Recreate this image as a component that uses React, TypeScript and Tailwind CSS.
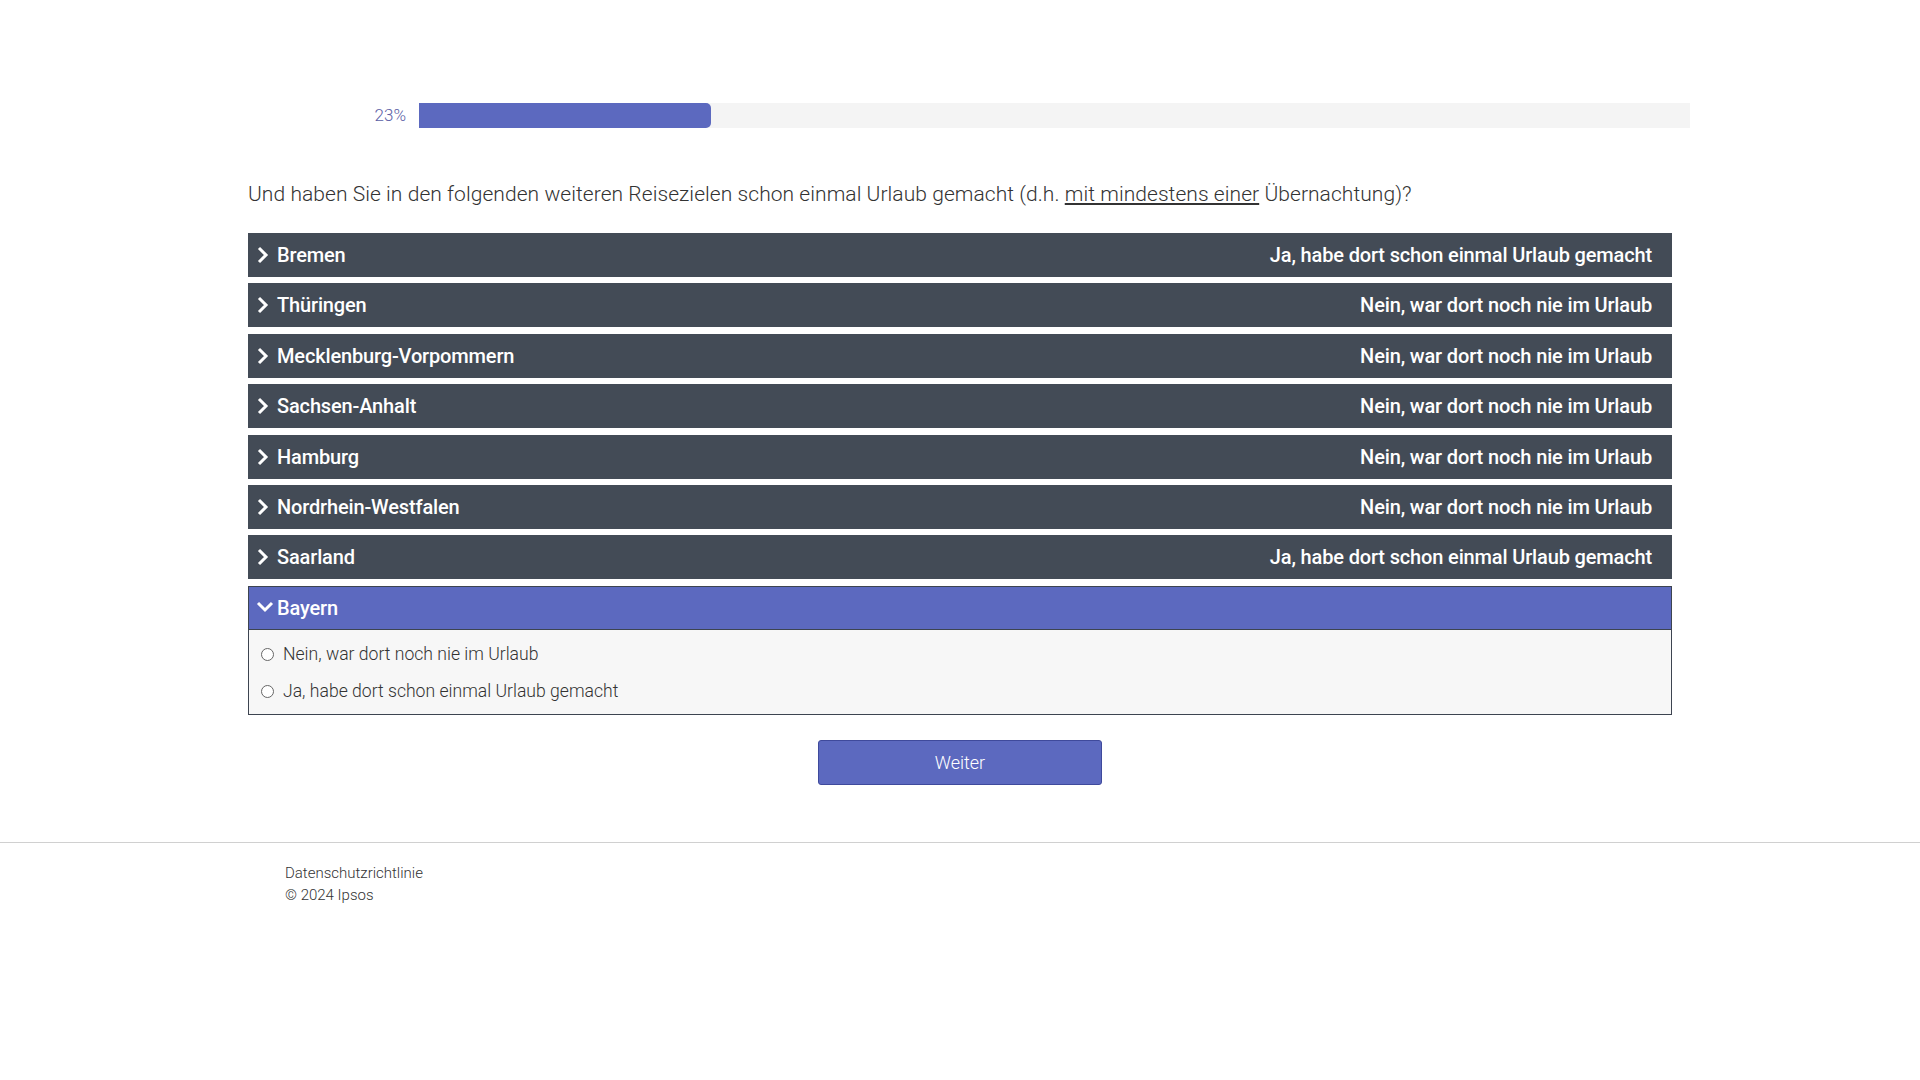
import React from "react";

type Row = { name: string; answer: string };

const rows: Row[] = [
  { name: "Bremen", answer: "Ja, habe dort schon einmal Urlaub gemacht" },
  { name: "Thüringen", answer: "Nein, war dort noch nie im Urlaub" },
  { name: "Mecklenburg-Vorpommern", answer: "Nein, war dort noch nie im Urlaub" },
  { name: "Sachsen-Anhalt", answer: "Nein, war dort noch nie im Urlaub" },
  { name: "Hamburg", answer: "Nein, war dort noch nie im Urlaub" },
  { name: "Nordrhein-Westfalen", answer: "Nein, war dort noch nie im Urlaub" },
  { name: "Saarland", answer: "Ja, habe dort schon einmal Urlaub gemacht" },
];

const options = ["Nein, war dort noch nie im Urlaub", "Ja, habe dort schon einmal Urlaub gemacht"];

function ChevronRight() {
  return (
    <svg width="18" height="18" viewBox="0 0 18 18" className="shrink-0">
      <polyline points="3,2 10,9 3,16" fill="none" stroke="white" strokeWidth="3" strokeLinejoin="miter" />
    </svg>
  );
}

function ChevronDown() {
  return (
    <svg width="18" height="18" viewBox="0 0 18 18" className="shrink-0">
      <polyline points="2,4 9,11 16,4" fill="none" stroke="white" strokeWidth="3" strokeLinejoin="miter" />
    </svg>
  );
}

export default function App() {
  return (
    <div className="min-h-screen bg-white font-['Roboto',sans-serif] text-[#333]">
      <div className="w-[1424px] mx-auto pt-[103px]">
        {/* Progress */}
        <div className="flex items-center h-[25px]">
          <div className="w-[171px] shrink-0 text-right pr-[13px] text-[17px] font-light text-[#5b60a6]">23%</div>
          <div className="w-[1271px] shrink-0 h-[25px] bg-[#f4f4f4]">
            <div className="h-full rounded-r-[5px] bg-[#5c69bf]" style={{ width: "23%" }} />
          </div>
        </div>

        {/* Question */}
        <p className="mt-[52px] text-[21px] leading-[28px] font-light tracking-[0.06px] text-[#333]">
          Und haben Sie in den folgenden weiteren Reisezielen schon einmal Urlaub gemacht (d.h.{" "}
          <span className="underline underline-offset-2">mit mindestens einer</span> Übernachtung)?
        </p>

        {/* Accordion */}
        <div className="mt-[25px] flex flex-col gap-[6.4px]">
          {rows.map((r) => (
            <div
              key={r.name}
              className="h-[44px] bg-[#434b56] flex items-center justify-between pl-[8px] pr-[20px] text-white text-[20px] font-medium tracking-[-0.15px]"
            >
              <div className="flex items-center gap-[3px]">
                <ChevronRight />
                <span>{r.name}</span>
              </div>
              <span>{r.answer}</span>
            </div>
          ))}

          <div className="border border-[#3d4450]">
            <div className="h-[42px] bg-[#5c69bf] flex items-center pl-[7px] text-white text-[20px] font-medium tracking-[-0.15px]">
              <div className="flex items-center gap-[3px]">
                <ChevronDown />
                <span>Bayern</span>
              </div>
            </div>
            <div className="bg-[#f7f7f7] border-t border-[#3d4450] pt-[6px] pb-[4px]">
              {options.map((o) => (
                <label key={o} className="h-[37px] flex items-center pl-[12px] gap-[9px] text-[17.6px] font-light text-[#333]">
                  <span className="w-[13px] h-[13px] rounded-full border border-[#666] bg-white shrink-0" />
                  <span>{o}</span>
                </label>
              ))}
            </div>
          </div>
        </div>

        {/* Button */}
        <div className="mt-[25px] flex justify-center">
          <button className="w-[284px] h-[45px] bg-[#5c69bf] border border-[#3f4a9c] rounded-[3px] text-white text-[18px] font-light">
            Weiter
          </button>
        </div>
      </div>

      {/* Footer */}
      <div className="mt-[57px] border-t border-[#d0d0d0]">
        <div className="w-[1424px] mx-auto pl-[37px] pt-[19px] text-[15px] leading-[22px] font-light text-[#333]">
          <div>Datenschutzrichtlinie</div>
          <div>© 2024 Ipsos</div>
        </div>
      </div>
    </div>
  );
}
